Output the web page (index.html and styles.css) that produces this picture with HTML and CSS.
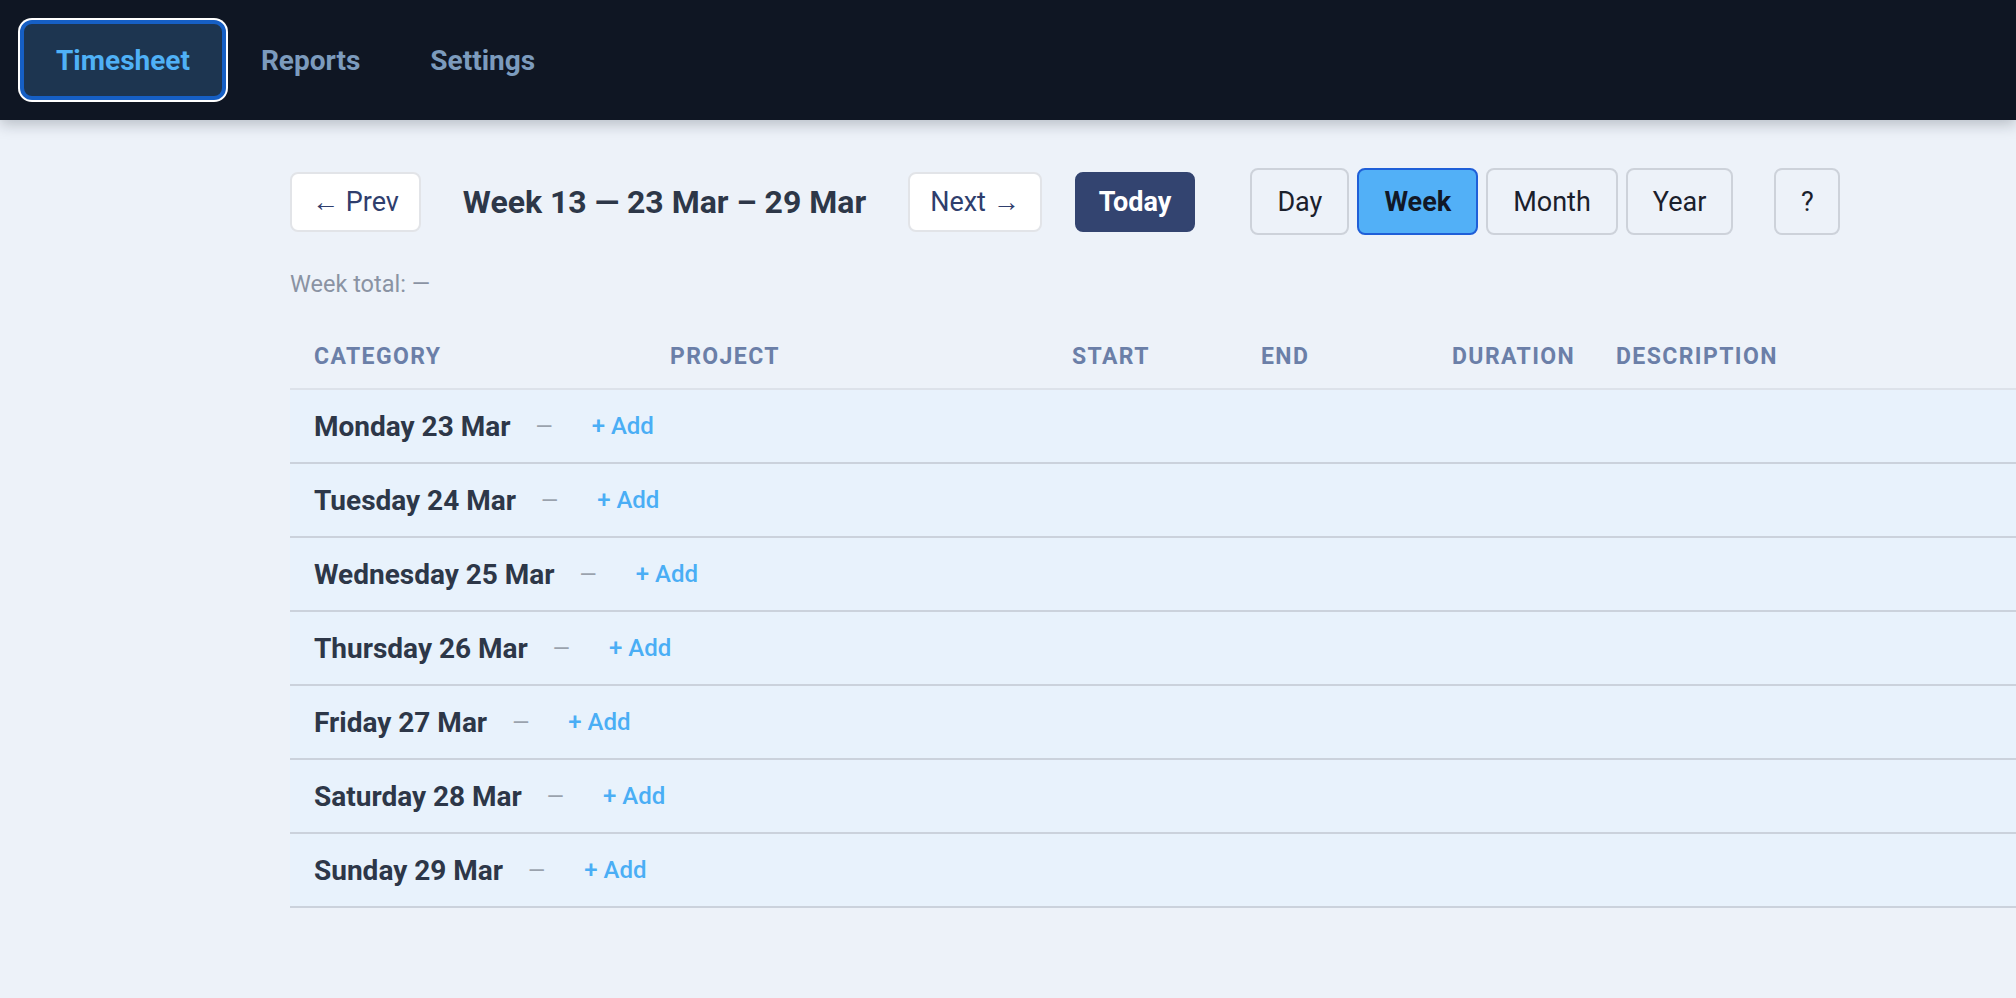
FILE: index.html
```html
<!DOCTYPE html>
<html lang="en">
<head>
    <meta charset="UTF-8">
    <meta name="viewport" content="width=device-width, initial-scale=1.0">
    <title>Timesheet</title>
    <link rel="stylesheet" href="styles.css">
</head>
<body>

    <!-- Top navigation -->
    <header class="topbar">
        <nav class="nav">
            <button class="nav-item active">Timesheet</button>
            <button class="nav-item">Reports</button>
            <button class="nav-item">Settings</button>
        </nav>
    </header>

    <main class="page">
        <!-- Week navigation and view switch -->
        <div class="toolbar">
            <button class="btn">&larr; Prev</button>
            <h1 class="period">Week 13 — 23 Mar – 29 Mar</h1>
            <button class="btn">Next &rarr;</button>
            <button class="btn btn-today">Today</button>
            <div class="views">
                <button class="view">Day</button>
                <button class="view selected">Week</button>
                <button class="view">Month</button>
                <button class="view">Year</button>
            </div>
            <button class="view help">?</button>
        </div>

        <div class="week-total">Week total: —</div>

        <table class="entries">
            <colgroup>
                <col style="width: 356px">
                <col style="width: 402px">
                <col style="width: 189px">
                <col style="width: 191px">
                <col style="width: 164px">
                <col>
            </colgroup>
            <thead>
                <tr>
                    <th>Category</th>
                    <th>Project</th>
                    <th>Start</th>
                    <th>End</th>
                    <th>Duration</th>
                    <th>Description</th>
                </tr>
            </thead>
            <tbody id="days"></tbody>
        </table>
    </main>

    <script>
        const days = [
            'Monday 23 Mar',
            'Tuesday 24 Mar',
            'Wednesday 25 Mar',
            'Thursday 26 Mar',
            'Friday 27 Mar',
            'Saturday 28 Mar',
            'Sunday 29 Mar'
        ];

        const body = document.getElementById('days');
        days.forEach(function (day) {
            const row = document.createElement('tr');
            row.className = 'day-row';
            row.innerHTML =
                '<td colspan="6"><div class="day">' +
                '<span class="day-name">' + day + '</span>' +
                '<span class="day-total">—</span>' +
                '<a href="#" class="add">+ Add</a>' +
                '</div></td>';
            body.appendChild(row);
        });
    </script>
</body>
</html>
```

FILE: styles.css
```css
/* Global */
body {
    margin: 0;
    background-color: #edf2f9;
    font-family: Roboto, "Liberation Sans", Arial, sans-serif;
    color: #2d3748;
    overflow: hidden;
}

button {
    font-family: inherit;
    cursor: pointer;
}

/* Top bar */
.topbar {
    background-color: #0f1623;
    padding: 20px;
    box-shadow: 0 4px 14px rgba(15, 22, 35, 0.25);
    position: relative;
}

.nav {
    display: flex;
}

.nav-item {
    height: 80px;
    padding: 0 35px;
    background: transparent;
    border: none;
    border-radius: 12px;
    color: #7c9bbd;
    font-size: 28px;
    font-weight: 700;
}

.nav-item.active {
    background-color: #1d3550;
    color: #4fb1f6;
    border: 4px solid #165fc4;
    box-shadow: 0 0 0 2px #ffffff;
    padding: 0 32px;
}

/* Main area */
.page {
    padding: 48px 0 0 290px;
}

.toolbar {
    display: flex;
    align-items: center;
}

.btn {
    height: 60px;
    padding: 0 20px;
    background-color: #ffffff;
    border: 2px solid #e2e4e8;
    border-radius: 8px;
    color: #2f3e6d;
    font-size: 27px;
}

.btn-today {
    margin-left: 33px;
    padding: 0 22px;
    background-color: #334470;
    border-color: #334470;
    color: #ffffff;
    font-weight: 700;
}

.period {
    margin: 0 42px;
    font-size: 32px;
    font-weight: 700;
    color: #2d3748;
}

.views {
    display: flex;
    gap: 8px;
    margin-left: 55px;
}

.view {
    height: 67px;
    padding: 0 25px;
    background-color: #edf2f9;
    border: 2px solid #cdd2da;
    border-radius: 8px;
    color: #1a202c;
    font-size: 27px;
}

.view.selected {
    background-color: #52b0f7;
    border-color: #1f5fd8;
    font-weight: 700;
    color: #111827;
}

.help {
    margin-left: 41px;
    width: 66px;
    padding: 0;
}

.week-total {
    margin-top: 35px;
    font-size: 23.5px;
    color: #8a93a3;
}

/* Entries table */
.entries {
    width: 100%;
    margin-top: 26px;
    border-collapse: collapse;
    table-layout: fixed;
}

.entries th {
    height: 64px;
    padding: 0 24px;
    text-align: left;
    font-size: 23px;
    font-weight: 700;
    letter-spacing: 1.4px;
    text-transform: uppercase;
    color: #6b7fa8;
    border-bottom: 2px solid #dde2ea;
    white-space: nowrap;
}

.day-row td {
    height: 72px;
    padding: 0 24px;
    background-color: #e8f2fc;
    border-bottom: 2px solid #cbd2dc;
}

.day {
    display: flex;
    align-items: center;
    gap: 25px;
}

.day-name {
    font-size: 28px;
    font-weight: 700;
    color: #2d3748;
}

.day-total {
    font-size: 22px;
    color: #9aa2ad;
}

.add {
    margin-left: 14px;
    font-size: 24px;
    font-weight: 500;
    color: #4aaef5;
    text-decoration: none;
}
```
